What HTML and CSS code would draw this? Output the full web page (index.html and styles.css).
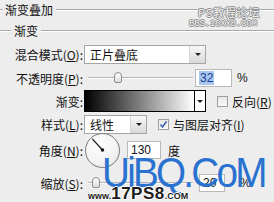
FILE: index.html
```html
<!DOCTYPE html>
<html>
<head>
<meta charset="utf-8">
<link rel="stylesheet" href="styles.css">
</head>
<body>
<div class="panel">
  <div class="legend title"><span class="ln lead1"></span><span class="legend-text">渐变叠加</span><span class="ln"></span></div>
  <div class="legend sub"><span class="ln lead2"></span><span class="legend-text">渐变</span><span class="ln"></span></div>

  <div class="form">
    <div class="row r-blend">
      <span class="label">混合模式(<u>O</u>):</span>
      <div class="select blend"><span class="val">正片叠底</span><span class="arrow"><i></i></span></div>
    </div>
    <div class="row r-opacity">
      <span class="label">不透明度(<u>P</u>):</span>
      <div class="slider op"><span class="thumb"></span></div>
      <div class="input num"><span class="sel">32</span></div>
      <span class="unit">%</span>
    </div>
    <div class="row r-grad">
      <span class="label">渐变:</span>
      <div class="grad"><span class="ramp"></span><span class="garrow"><i></i></span></div>
      <span class="check"></span>
      <span class="ctext">反向(<u>R</u>)</span>
    </div>
    <div class="row r-style">
      <span class="label">样式(<u>L</u>):</span>
      <div class="select style"><span class="val">线性</span><span class="arrow"><i></i></span></div>
      <span class="check on"><svg width="9" height="9" viewBox="0 0 9 9"><path d="M1.5 4.5 L3.5 7 L7.5 1.5" fill="none" stroke="#3a5fb0" stroke-width="1.6"/></svg></span>
      <span class="ctext">与图层对齐(<u>I</u>)</span>
    </div>
    <div class="row r-angle">
      <span class="label">角度(<u>N</u>):</span>
      <div class="dial"><svg width="34" height="34" viewBox="0 0 34 34"><line x1="17" y1="17" x2="6.5" y2="5.5" stroke="#111" stroke-width="1.2"/><circle cx="17" cy="17" r="1.8" fill="#111"/></svg></div>
      <div class="input ang">130</div>
      <span class="unit deg">度</span>
    </div>
    <div class="row r-scale">
      <span class="label">缩放(<u>S</u>):</span>
      <div class="slider sc"><span class="thumb"></span></div>
      <div class="input num2">20</div>
      <span class="unit">%</span>
    </div>
  </div>

  <div class="wm-ps">PS教程论坛</div>
  <div class="wm-bbs">BBS.16XX8.COM</div>
  <div class="wm-uibq">UiBQ.CoM</div>
  <div class="wm-17"><span class="small">www.</span><span class="big">17PS8</span><span class="small">.COM</span></div>
</div>
</body>
</html>
```

FILE: styles.css
```css
html, body {
  margin: 0;
  padding: 0;
}
body {
  width: 274px;
  height: 202px;
  overflow: hidden;
  background: #ededed;
  font-family: "Noto Sans CJK SC", "Liberation Sans", sans-serif;
  font-size: 12px;
  color: #111;
}
.panel {
  position: relative;
  width: 274px;
  height: 202px;
  padding-top: 3px;
  box-sizing: border-box;
}
.legend {
  display: flex;
  align-items: center;
  height: 14px;
  line-height: 14px;
}
.legend.sub {
  margin-top: 7px;
}
.ln {
  flex: 1;
  height: 0;
  border-top: 1px solid #a8a8a8;
  border-bottom: 1px solid #fff;
}
.ln.lead1 { flex: 0 0 3px; }
.ln.lead2 { flex: 0 0 11px; }
.legend-text {
  padding: 0 3px;
  font-size: 12px;
}
.title .legend-text { padding-left: 2px; }
.form {
  margin-top: 6px;
  display: flex;
  flex-direction: column;
}
.row {
  display: flex;
  align-items: center;
}
.label {
  width: 83px;
  text-align: right;
  flex: none;
  white-space: nowrap;
}
.label u { text-decoration: underline; }
.r-blend { height: 21px; }
.r-opacity { height: 20px; margin-top: 3px; }
.r-grad { height: 22px; margin-top: 2px; }
.r-style { height: 20px; margin-top: 2px; }
.r-angle { height: 34px; margin-top: -1px; }
.r-scale { height: 18px; margin-top: 7px; }

.select {
  display: flex;
  align-items: stretch;
  height: 19px;
  background: #fff;
  border: 1px solid #a5a5a5;
  box-sizing: border-box;
  margin-left: 1px;
}
.select .val {
  flex: 1;
  padding-left: 5px;
  line-height: 17px;
}
.select .arrow {
  width: 15px;
  border-left: 1px solid #d7d7d7;
  background: linear-gradient(#f7f7f7, #d9d9d9);
  display: flex;
  align-items: center;
  justify-content: center;
}
.arrow i, .garrow i {
  width: 0;
  height: 0;
  border-left: 3px solid transparent;
  border-right: 3px solid transparent;
  border-top: 3px solid #222;
}
.select.blend { width: 122px; }
.select.style { width: 63px; }

.slider {
  position: relative;
  height: 12px;
  margin-left: 5px;
  flex: none;
}
.slider::before {
  content: "";
  position: absolute;
  left: 0;
  right: 0;
  top: 5px;
  border-top: 1px solid #b4b4b4;
  border-bottom: 1px solid #fff;
}
.slider.op { width: 105px; }
.slider.sc { width: 105px; }
.thumb {
  position: absolute;
  top: 0;
  width: 8px;
  height: 11px;
  background: linear-gradient(#fff, #dcdcdc);
  border: 1px solid #8e8e8e;
  border-radius: 4px 4px 2px 2px;
  box-sizing: border-box;
}
.op .thumb { left: 26px; }
.sc .thumb { left: 4px; }

.input {
  height: 18px;
  box-sizing: border-box;
  background: #fff;
  border: 1px solid #b9b9b9;
  line-height: 16px;
  padding-left: 3px;
  font-family: "Liberation Sans", sans-serif;
  font-size: 12px;
}
.input.num { width: 37px; margin-left: 2px; }
.sel {
  background: #a9c6ec;
  color: #1a3f98;
  padding: 0 1px;
}
.unit {
  margin-left: 5px;
  font-family: "Liberation Sans", sans-serif;
}
.input.ang { width: 34px; margin-left: 7px; }
.unit.deg {
  margin-left: 7px;
  font-family: "Noto Sans CJK SC", sans-serif;
}
.input.num2 { width: 26px; margin-left: 6px; }
.r-scale .unit { margin-left: 15px; }

.grad {
  display: flex;
  width: 122px;
  height: 22px;
  margin-left: 1px;
  border: 1px solid #000;
  box-sizing: border-box;
  background: #fff;
}
.ramp {
  flex: 1;
  background: linear-gradient(to right, #000 0%, #fff 100%);
}
.garrow {
  width: 10px;
  border-left: 1px solid #000;
  display: flex;
  align-items: center;
  justify-content: center;
}
.check {
  width: 11px;
  height: 11px;
  box-sizing: border-box;
  border: 1px solid #a0a0a0;
  background: linear-gradient(#e8e8e8, #fafafa);
  margin-left: 11px;
  display: flex;
  align-items: center;
  justify-content: center;
}
.r-style .check { margin-left: 11px; }
.ctext { margin-left: 4px; }

.dial {
  width: 35px;
  height: 35px;
  margin-left: 2px;
  border-radius: 50%;
  border: 1px solid #7a7a7a;
  box-sizing: border-box;
  background: radial-gradient(circle at 40% 35%, #ffffff 0%, #f2f2f2 60%, #dcdcdc 100%);
  display: flex;
  align-items: center;
  justify-content: center;
  flex: none;
}
.dial svg { display: block; }

.wm-ps, .wm-bbs {
  position: absolute;
  color: #f2f2f2;
  text-shadow: 1px 0 0 #8a8a8a, -1px 0 0 #8a8a8a, 0 1px 0 #8a8a8a, 0 -1px 0 #8a8a8a;
  white-space: nowrap;
}
.wm-ps {
  left: 198px;
  top: 6px;
  font-size: 11px;
  line-height: 12px;
  letter-spacing: 0.8px;
}
.wm-bbs {
  left: 189px;
  top: 19px;
  font-family: "Liberation Mono", monospace;
  font-size: 9px;
  line-height: 10px;
  letter-spacing: -0.2px;
}
.wm-uibq {
  position: absolute;
  left: 102px;
  top: 153px;
  font-family: "Liberation Sans", sans-serif;
  font-size: 42px;
  line-height: 40px;
  color: #2a72d0;
  letter-spacing: -3px;
  white-space: nowrap;
  transform: scaleX(0.92);
  transform-origin: left top;
}
.wm-17 {
  position: absolute;
  left: 88px;
  top: 186px;
  font-family: "Liberation Sans", sans-serif;
  font-weight: bold;
  color: #1d1d1d;
  white-space: nowrap;
  line-height: 16px;
  text-shadow: 1px 0 0 #fff, -1px 0 0 #fff, 0 1px 0 #fff, 0 -1px 0 #fff;
}
.wm-17 .small { font-size: 9px; }
.wm-17 .big { font-size: 17px; letter-spacing: 0.5px; }
```
